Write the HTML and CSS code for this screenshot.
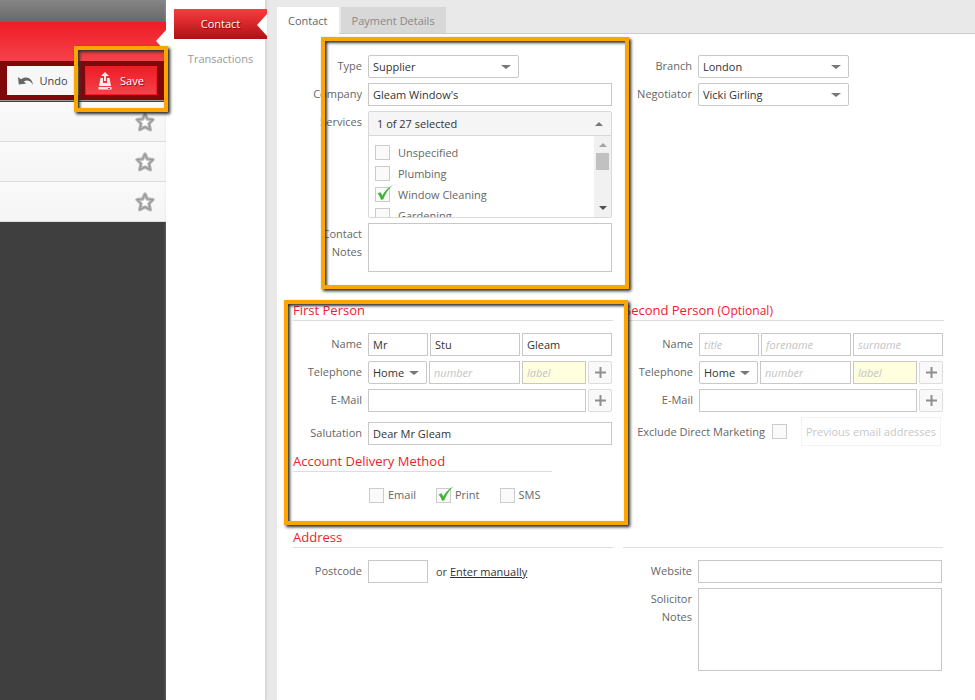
FILE: index.html
```html
<!DOCTYPE html>
<html lang="en">
<head>
<meta charset="utf-8">
<title>Contact</title>
<link rel="stylesheet" href="styles.css">
</head>
<body>
<svg class="defs" aria-hidden="true">
  <symbol id="star" viewBox="0 0 20 20"><path d="M10 2 L12.300 7 L18 7.600 L14 11.600 L15.300 17.800 L10 15 L4.700 17.800 L6 11.600 L2 7.600 L7.700 7 Z" fill="#fff" stroke="#b8b8b8" stroke-width="3.400" stroke-linejoin="round"/><path d="M10 2 L12.300 7 L18 7.600 L14 11.600 L15.300 17.800 L10 15 L4.700 17.800 L6 11.600 L2 7.600 L7.700 7 Z" fill="none" stroke="#989898" stroke-width="1.200" stroke-linejoin="round"/></symbol>
  <symbol id="tick" viewBox="0 0 16 16"><path d="M0.5 8.5 L3.5 7.2 L5.3 10.6 C7.5 6.5 11 2.5 15.5 0.3 C11.5 4 8.5 8.5 6.2 14.4 L4 14.8 C3.2 12.3 2.2 10.2 0.5 8.5 Z" fill="#3fb63a"/></symbol>
  <symbol id="plus" viewBox="0 0 11 11"><path d="M4.5 0h2v4.5H11v2H6.5V11h-2V6.500H0v-2h4.500z" fill="#8f8f8f"/></symbol>
</svg>
<div class="app">
  <aside class="sidebar">
    <div class="topbar"></div>
    <div class="banner"></div>
    <div class="actions">
      <button class="btn undo" type="button"><svg width="16" height="10" viewBox="0 0 16 10"><path d="M0 1 L0.800 8.500 L8.300 7.500 L5.800 5.600 C8.500 3.600 12.800 4.400 14.600 8.800 C15.300 3.500 9 -1.200 3 3.200 Z" fill="#666"/></svg>Undo</button>
      <div class="save-wrap">
        <button class="btn save" type="button"><svg width="14" height="18" viewBox="0 0 14 18"><path d="M2.500 6H5v5h4V6h2.500l1.500 8H1z M0.500 15h13v2.500h-13z" fill="#ffe9e9"/><path d="M7 0 L11 4 H8 V9 H6 V4 H3 Z" fill="#ffe9e9"/><path d="M10 16h2v1h-2z" fill="#ee2a33"/></svg>Save</button>
        <span class="mark mark-save"></span>
      </div>
    </div>
    <ul class="records">
      <li><svg width="20" height="20"><use href="#star"/></svg></li>
      <li><svg width="20" height="20"><use href="#star"/></svg></li>
      <li><svg width="20" height="20"><use href="#star"/></svg></li>
    </ul>
  </aside>

  <nav class="nav">
    <a class="nav-item current" href="#contact">Contact</a>
    <a class="nav-item" href="#transactions">Transactions</a>
  </nav>

  <main class="main">
    <div class="tabs">
      <button class="tab active" type="button">Contact</button>
      <button class="tab" type="button">Payment Details</button>
    </div>
    <form class="panel">
      <section class="pair">
        <div class="col">
          <span class="mark mark-details"></span>
          <div class="row">
            <label class="lbl" for="type">Type</label>
            <span class="select"><select id="type"><option>Supplier</option></select></span>
          </div>
          <div class="row">
            <label class="lbl" for="company">Company</label>
            <input class="text" id="company" value="Gleam Window's">
          </div>
          <div class="row">
            <span class="lbl">Services</span>
            <div class="multi">
              <button class="multi-head" type="button">1 of 27 selected</button>
              <div class="multi-body">
                <div class="options">
                  <label class="check"><span class="box"><input type="checkbox"></span>Unspecified</label>
                  <label class="check"><span class="box"><input type="checkbox"></span>Plumbing</label>
                  <label class="check"><span class="box"><input type="checkbox" checked><svg><use href="#tick"/></svg></span>Window Cleaning</label>
                  <label class="check"><span class="box"><input type="checkbox"></span>Gardening</label>
                </div>
                <div class="scroll"><span class="thumb"></span></div>
              </div>
            </div>
          </div>
          <div class="row">
            <label class="lbl" for="notes">Contact Notes</label>
            <textarea class="text notes" id="notes"></textarea>
          </div>
        </div>
        <div class="col">
          <div class="row">
            <label class="lbl" for="branch">Branch</label>
            <span class="select"><select id="branch"><option>London</option></select></span>
          </div>
          <div class="row">
            <label class="lbl" for="negotiator">Negotiator</label>
            <span class="select"><select id="negotiator"><option>Vicki Girling</option></select></span>
          </div>
        </div>
      </section>

      <section class="pair people">
        <div class="col">
          <span class="mark mark-person"></span>
          <h2>First Person</h2>
          <div class="row">
            <label class="lbl" for="t1">Name</label>
            <div class="fields">
              <input class="text title" id="t1" value="Mr">
              <input class="text" aria-label="Forename" value="Stu">
              <input class="text" aria-label="Surname" value="Gleam">
            </div>
          </div>
          <div class="row">
            <label class="lbl" for="p1">Telephone</label>
            <div class="fields">
              <span class="select small"><select aria-label="Telephone type"><option>Home</option></select></span>
              <input class="text" id="p1" placeholder="number">
              <input class="text tag" aria-label="Label" placeholder="label">
              <button class="add" type="button" aria-label="Add telephone"><svg width="11" height="11"><use href="#plus"/></svg></button>
            </div>
          </div>
          <div class="row">
            <label class="lbl" for="e1">E-Mail</label>
            <div class="fields">
              <input class="text" id="e1">
              <button class="add" type="button" aria-label="Add e-mail"><svg width="11" height="11"><use href="#plus"/></svg></button>
            </div>
          </div>
          <div class="row salutation">
            <label class="lbl" for="sal">Salutation</label>
            <input class="text" id="sal" value="Dear Mr Gleam">
          </div>
          <h2 class="delivery">Account Delivery Method</h2>
          <div class="methods">
            <label class="check"><span class="box"><input type="checkbox"></span>Email</label>
            <label class="check"><span class="box"><input type="checkbox" checked><svg><use href="#tick"/></svg></span>Print</label>
            <label class="check"><span class="box"><input type="checkbox"></span>SMS</label>
          </div>
        </div>
        <div class="col">
          <h2>Second Person <small>(Optional)</small></h2>
          <div class="row">
            <label class="lbl" for="t2">Name</label>
            <div class="fields">
              <input class="text title" id="t2" placeholder="title">
              <input class="text" aria-label="Forename" placeholder="forename">
              <input class="text" aria-label="Surname" placeholder="surname">
            </div>
          </div>
          <div class="row">
            <label class="lbl" for="p2">Telephone</label>
            <div class="fields">
              <span class="select small"><select aria-label="Telephone type"><option>Home</option></select></span>
              <input class="text" id="p2" placeholder="number">
              <input class="text tag" aria-label="Label" placeholder="label">
              <button class="add" type="button" aria-label="Add telephone"><svg width="11" height="11"><use href="#plus"/></svg></button>
            </div>
          </div>
          <div class="row">
            <label class="lbl" for="e2">E-Mail</label>
            <div class="fields">
              <input class="text" id="e2">
              <button class="add" type="button" aria-label="Add e-mail"><svg width="11" height="11"><use href="#plus"/></svg></button>
            </div>
          </div>
          <div class="marketing">
            <label class="check">Exclude Direct Marketing<span class="box"><input type="checkbox"></span></label>
            <button class="previous" type="button" disabled>Previous email addresses</button>
          </div>
        </div>
      </section>

      <section class="pair address">
        <div class="col">
          <h2>Address</h2>
          <div class="row">
            <label class="lbl" for="postcode">Postcode</label>
            <input class="text title" id="postcode">
            <span class="manual">or <a href="#manual">Enter manually</a></span>
          </div>
        </div>
        <div class="col">
          <div class="rule"></div>
          <div class="row">
            <label class="lbl" for="website">Website</label>
            <input class="text" id="website">
          </div>
          <div class="row">
            <label class="lbl" for="solicitor">Solicitor Notes</label>
            <textarea class="text solicitor" id="solicitor"></textarea>
          </div>
        </div>
      </section>
    </form>
  </main>
</div>
</body>
</html>
```
FILE: styles.css
```css
* { box-sizing: border-box; }
body {
  margin: 0;
  font: 11px/18px "Open Sans", "Noto Sans", sans-serif;
  color: #666;
  background: #e9e9e9;
}
button, input, select, textarea { font: inherit; color: #333; margin: 0; }
.defs { position: absolute; width: 0; height: 0; }
.app { display: flex; min-height: 100vh; }

/* Record list */
.sidebar { width: 166px; flex: none; background: #3f3f3f; }
.topbar { height: 22px; background: linear-gradient(#858585, #686868); }
.banner {
  position: relative;
  height: 39px;
  background: linear-gradient(#ee1c25, #f4424b);
}
.banner::after {
  content: "";
  position: absolute;
  right: 0;
  top: 8px;
  border: 11px solid transparent;
  border-right: 10px solid #fff;
  border-left: 0;
}
.actions {
  display: flex;
  gap: 6px;
  padding: 5px 9px 5px 7px;
  background: #7e080a;
}
.btn {
  display: flex;
  align-items: center;
  justify-content: center;
  width: 72px;
  height: 29px;
  padding: 0;
  border: 0;
}
.undo { gap: 5px; background: #f7f7f7; color: #444; }
.save {
  gap: 8px;
  color: #fff;
  border: 1px solid #ee1c25;
  background: linear-gradient(#ee1c25, #f4424b);
  text-shadow: 1px 1px 1px #8a0a0e;
}
.save-wrap { position: relative; }
.records {
  list-style: none;
  margin: 0;
  padding: 0;
  border-top: 1px solid #999;
  background: #f8f8f8;
}
.records li {
  display: flex;
  justify-content: flex-end;
  align-items: center;
  height: 40px;
  padding-right: 11px;
  border-bottom: 1px solid #ddd;
  background: linear-gradient(#fafafa, #f5f5f5);
}
.records li:first-child { height: 41px; border-top: 1px solid #444; }

/* Section navigation */
.nav {
  width: 99px;
  flex: none;
  padding: 9px 0 0 8px;
  background: #fff;
  box-shadow: 1px 0 3px #ccc;
}
.nav-item {
  display: block;
  position: relative;
  width: 93px;
  margin-bottom: 5px;
  line-height: 30px;
  text-align: center;
  color: #999;
  text-decoration: none;
}
.nav-item.current {
  color: #fff;
  background: linear-gradient(#fa3c40, #b01014);
  text-shadow: 1px 1px 1px #700;
}
.nav-item.current::after {
  content: "";
  position: absolute;
  right: 0;
  top: 5px;
  border: 11px solid transparent;
  border-right: 10px solid #fff;
  border-left: 0;
}

/* Tabs and form */
.main { flex: 1; min-width: 0; margin-left: 12px; display: flex; flex-direction: column; }
.tabs { display: flex; gap: 2px; padding-top: 7px; box-shadow: inset 0 -1px #ccc; }
.tab { height: 27px; padding: 2px 11px 0; border: 0; background: #d8d8d8; color: #888; border-bottom: 1px solid #ccc; }
.tab.active { background: #fff; color: #666; border-color: #fff; }
.panel { flex: 1; padding: 21px 16px; background: #fff; }
.pair {
  display: grid;
  grid-template-columns: repeat(2, minmax(0, 1fr));
  gap: 10px;
  max-width: 650px;
}
.people { column-gap: 11px; margin-top: 29px; max-width: 651px; }
.address { margin-top: 24px; }
.col { position: relative; display: flex; flex-direction: column; gap: 5px; }
.row { display: flex; gap: 6px; padding-right: 1px; }
.lbl { width: 69px; flex: none; padding-top: 2px; text-align: right; }
h2, .rule {
  height: 20px;
  margin: 0 0 7px;
  border-bottom: 1px solid #ddd;
  color: #ed1c2e;
  font-size: 13px;
  font-weight: 400;
  line-height: 18px;
}
h2 small { font-size: 12px; }

.text {
  flex: 1;
  min-width: 0;
  height: 23px;
  padding: 0 4px;
  border: 1px solid #c8c8c8;
  background: #fff;
  resize: none;
}
.text::placeholder { color: #c4c4c4; font-style: italic; opacity: 1; }
.title { flex: 0 0 60px; }
.tag { flex: 0 0 64px; background: #ffffdf; }
.notes { height: 49px; }
.solicitor { height: 83px; }
.fields { flex: 1; min-width: 0; display: flex; gap: 2px; }

.select { position: relative; width: 151px; }
.select.small { width: 59px; }
select {
  appearance: none;
  width: 100%;
  height: 23px;
  padding: 0 4px;
  border: 1px solid #c8c8c8;
  border-radius: 2px;
  background: #fff;
}
.select::after {
  content: "";
  position: absolute;
  right: 8px;
  top: 10px;
  border: 5px solid transparent;
  border-top: 4px solid #777;
  border-bottom: 0;
  pointer-events: none;
}

.multi {
  flex: 1;
  border: 1px solid #d8d8d8;
  border-radius: 2px;
}
.multi-head {
  display: flex;
  justify-content: space-between;
  align-items: center;
  width: 100%;
  height: 24px;
  padding: 0 8px;
  border: 0;
  border-bottom: 1px solid #d8d8d8;
  background: #f5f5f5;
}
.multi-head::after {
  content: "";
  border: 4px solid transparent;
  border-bottom-color: #777;
  border-top: 0;
}
.multi-body { display: flex; height: 81px; overflow: hidden; }
.options { flex: 1; padding: 6px 6px 0; }
.options .check { height: 21px; gap: 8px; }
.scroll {
  display: flex;
  flex-direction: column;
  align-items: center;
  justify-content: space-between;
  width: 17px;
  padding: 7px 2px;
  background: #f1f1f1;
}
.scroll::before, .scroll::after { content: ""; border: 4px solid transparent; }
.scroll::before { border-top: 0; border-bottom-color: #a3a3a3; }
.scroll::after { border-bottom: 0; border-top-color: #505050; }
.thumb { width: 13px; height: 17px; margin: 6px 0 auto; background: #c1c1c1; }

.check { display: flex; align-items: center; gap: 4px; }
.box { position: relative; width: 15px; height: 15px; }
.box input {
  appearance: none;
  display: block;
  width: 15px;
  height: 15px;
  border: 1px solid #ccc;
  background: #fafafa;
}
.box svg { position: absolute; left: 2px; top: -2px; width: 16px; height: 16px; pointer-events: none; }
.methods { display: flex; gap: 20px; padding: 2px 0 0 76px; }

.add {
  display: flex;
  align-items: center;
  justify-content: center;
  flex: 0 0 24px;
  height: 23px;
  padding: 0;
  border: 1px solid #ddd;
  border-radius: 2px;
  background: #f9f9f9;
}
.salutation { margin-top: 5px; }
.delivery { width: 259px; margin-top: 2px; }
.marketing { display: flex; justify-content: flex-end; gap: 14px; padding-right: 3px; }
.marketing .check { gap: 7px; }
.previous {
  height: 29px;
  padding: 0 4px;
  border: 1px solid #f3f3f3;
  background: #fff;
  color: #c8c8c8;
}
.manual { padding: 3px 2px; color: #444; }
.manual a { color: #333; }

/* Orange callout frames laid over the form */
.mark {
  position: absolute;
  z-index: 2;
  border: 4px solid #ffa500;
  box-shadow: 2px 2px 3px #222, inset 2px 2px 3px #333;
  pointer-events: none;
}
.mark-save { inset: -20px -11px -17px -11px; }
.mark-details { inset: -18px -16px -17px 28px; }
.mark-person { inset: -1px -15px -21px -9px; }
```
